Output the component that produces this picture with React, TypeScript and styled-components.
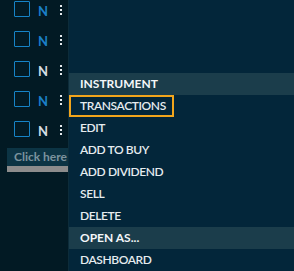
import styled, { createGlobalStyle } from 'styled-components';

const GlobalStyle = createGlobalStyle`
  html, body {
    margin: 0;
    padding: 0;
    background: #03263a;
  }
  #root {
    width: 294px;
    height: 271px;
    overflow: hidden;
  }
`;

const Screen = styled.div`
  display: flex;
  width: 294px;
  height: 271px;
  font-family: Lato, 'Open Sans', sans-serif;
  overflow: hidden;
`;

const Sidebar = styled.div`
  width: 68px;
  flex-shrink: 0;
  background: #021a24;
  border-right: 1px solid #0c2c3a;
  display: flex;
  flex-direction: column;
  overflow: hidden;
`;

const RowList = styled.div`
  display: flex;
  flex-direction: column;
  gap: 3px;
`;

const Row = styled.div`
  height: 27px;
  display: flex;
  align-items: flex-start;
  padding-left: 14px;
`;

const Box = styled.div`
  width: 14px;
  height: 14px;
  margin-top: 1px;
  border: 1px solid #1683c6;
  border-radius: 1px;
  flex-shrink: 0;
`;

const Flag = styled.span<{ $light: boolean }>`
  margin-left: 8px;
  margin-top: 5px;
  width: 22px;
  font-size: 13px;
  line-height: 13px;
  font-weight: 700;
  color: ${({ $light }) => ($light ? '#d6dde2' : '#1b80c8')};
`;

const Kebab = styled.div`
  margin-top: 5px;
  display: flex;
  flex-direction: column;
  gap: 2px;

  span {
    width: 2px;
    height: 2px;
    background: #e4e9ec;
  }
`;

const Filter = styled.div`
  margin: 1px 0 0 7px;
  display: flex;
  flex-direction: column;
`;

const FilterInput = styled.div`
  height: 18px;
  background: #0c3444;
  color: #7c939e;
  font-size: 12px;
  font-weight: 700;
  line-height: 18px;
  padding-left: 7px;
  white-space: nowrap;
  overflow: hidden;
  text-overflow: clip;
`;

const FilterBar = styled.div`
  height: 6px;
  background: #8c8c8c;
`;

const Main = styled.div`
  flex: 1;
  background: #03263a;
  display: flex;
  flex-direction: column;
  padding-top: 73px;
`;

const Menu = styled.div`
  display: flex;
  flex-direction: column;
`;

const Header = styled.div`
  height: 22px;
  line-height: 22px;
  padding-left: 11px;
  background: #1b3d4b;
  color: #f4f7f9;
  font-size: 12px;
  font-weight: 700;
`;

const Item = styled.div<{ $focused?: boolean }>`
  height: 22px;
  line-height: 22px;
  padding-left: 11px;
  color: #e6ecef;
  font-size: 12px;
  font-weight: 600;
  letter-spacing: -0.4px;

  ${({ $focused }) =>
    $focused &&
    `
    align-self: flex-start;
    box-sizing: border-box;
    line-height: 18px;
    padding: 0 6px 0 9px;
    border: 2px solid #f2a51c;
  `}
`;

const rows = [false, false, true, false, true];

export default function App() {
  return (
    <>
      <GlobalStyle />
      <Screen>
        <Sidebar>
          <RowList>
            {rows.map((light, i) => (
              <Row key={i}>
                <Box />
                <Flag $light={light}>N</Flag>
                <Kebab>
                  <span />
                  <span />
                  <span />
                </Kebab>
              </Row>
            ))}
          </RowList>
          <Filter>
            <FilterInput>Click here t</FilterInput>
            <FilterBar />
          </Filter>
        </Sidebar>
        <Main>
          <Menu>
            <Header>INSTRUMENT</Header>
            <Item $focused>TRANSACTIONS</Item>
            <Item>EDIT</Item>
            <Item>ADD TO BUY</Item>
            <Item>ADD DIVIDEND</Item>
            <Item>SELL</Item>
            <Item>DELETE</Item>
            <Header>OPEN AS...</Header>
            <Item>DASHBOARD</Item>
          </Menu>
        </Main>
      </Screen>
    </>
  );
}
